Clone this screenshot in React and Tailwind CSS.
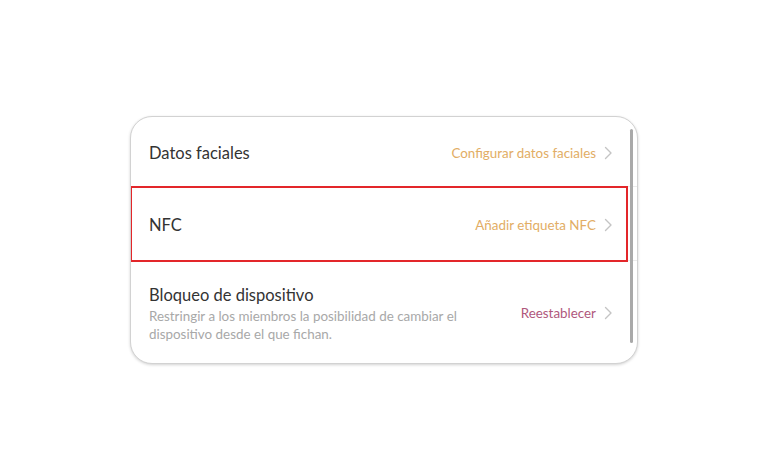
import React from 'react';

const Chevron = () => (
  <svg className="w-[9px] h-[14px] ml-[8px] shrink-0" viewBox="0 0 9 14" fill="none">
    <path d="M1.5 1.5 L7 7 L1.5 12.5" stroke="#c4c4c4" strokeWidth="1.4" strokeLinecap="round" strokeLinejoin="round" />
  </svg>
);

const App = () => {
  return (
    <div className="w-[768px] h-[474px] bg-white pt-[116px] pl-[130px]" style={{ fontFamily: 'Lato, "Open Sans", sans-serif' }}>
      <div className="relative w-[508px] h-[248px] rounded-[22px] border border-[#d2d2d2] bg-white shadow-[0_1px_3px_rgba(0,0,0,0.18)] overflow-hidden">
        <div className="h-[70px] border-b border-[#ececec] flex items-center pl-[18px] pr-[24px] pt-[3px]">
          <span className="text-[16.5px] text-[#333]">Datos faciales</span>
          <div className="ml-auto flex items-center">
            <span className="text-[13.4px] text-[#e2ad64]">Configurar datos faciales</span>
            <Chevron />
          </div>
        </div>

        <div className="h-[75px] border-b border-[#ececec]">
          <div className="w-[498px] h-[76px] -mt-[1px] -ml-[1px] border-2 border-[#e3262a] flex items-center pl-[17px] pr-[13px] pt-[3px]">
            <span className="text-[16.5px] text-[#333]">NFC</span>
            <div className="ml-auto flex items-center">
              <span className="text-[13.4px] text-[#e2ad64]">Añadir etiqueta NFC</span>
              <Chevron />
            </div>
          </div>
        </div>

        <div className="flex items-center pl-[18px] pr-[24px] pt-[23px]">
          <div className="w-[340px]">
            <div className="text-[16.5px] text-[#333] leading-[22px]">Bloqueo de dispositivo</div>
            <div className="text-[13.4px] text-[#a8a8a8] leading-[18px] mt-[1px]">
              Restringir a los miembros la posibilidad de cambiar el dispositivo desde el que fichan.
            </div>
          </div>
          <div className="ml-auto flex items-center">
            <span className="text-[13.4px] text-[#b0587c]">Reestablecer</span>
            <Chevron />
          </div>
        </div>

        <div className="absolute right-[4px] top-[12px] w-[3px] h-[214px] rounded-full bg-[#a9a9a9]" />
      </div>
    </div>
  );
};

export default App;
